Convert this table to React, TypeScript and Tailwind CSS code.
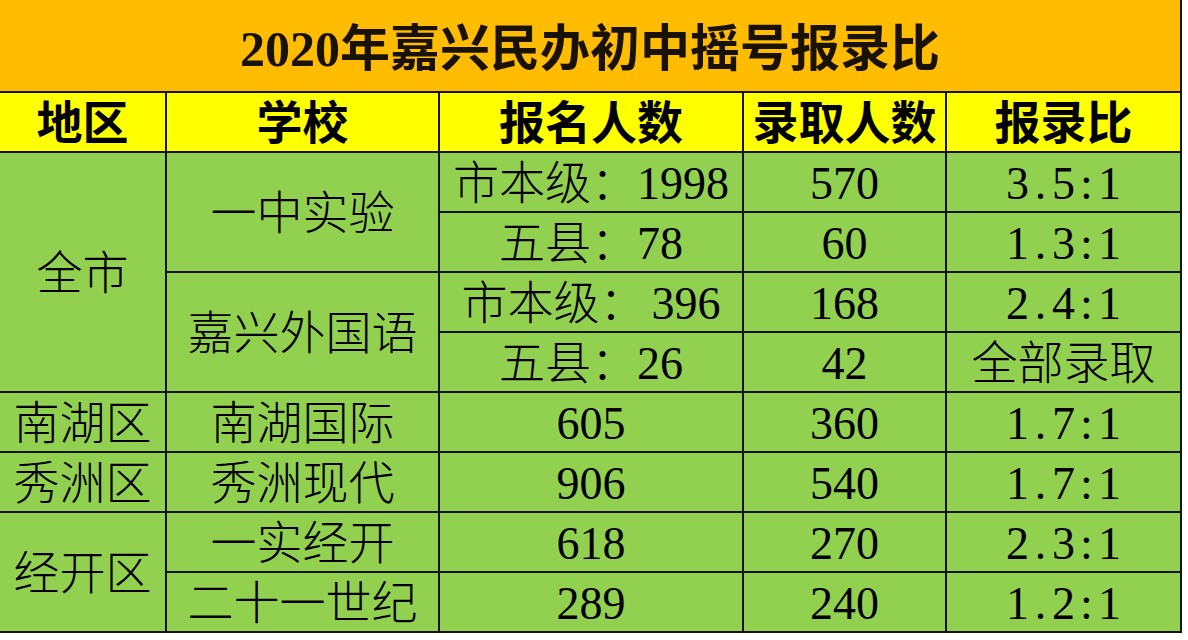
import React from "react";

const FONT = { fontFamily: '"Liberation Serif", "Noto Sans CJK SC", serif' };

function Mono({ s }: { s: string }) {
  return (
    <>
      {Array.from(s).map((ch, i) =>
        ch.charCodeAt(0) < 128 ? (
          <span key={i} className="inline-block w-[0.5em] text-center">
            {ch}
          </span>
        ) : (
          <span key={i}>{ch}</span>
        )
      )}
    </>
  );
}

const body = "bg-[#92D050] flex items-center justify-center text-[46px] leading-none font-light text-black pt-[4px]";
const head = "bg-[#FFFF00] flex items-center justify-center text-[46px] leading-none font-semibold text-black pt-[4px]";

export default function App() {
  return (
    <div className="w-[1188px] h-[640px] bg-white" style={FONT}>
      <div className="grid grid-cols-[165px_271px_302px_201px_233px] grid-rows-[91px_58px_repeat(8,58px)] gap-[2px] bg-[#141414] pr-[2px] pb-[2px] w-[1182px]">
        <div className="col-span-5 bg-[#FFBC00] flex items-center justify-center text-[50px] font-semibold leading-none pt-[6px] text-[#1a1200]">
          <span className="font-bold"><Mono s="2020" /></span>年嘉兴民办初中摇号报录比
        </div>
        <div className={head}>地区</div>
        <div className={head}>学校</div>
        <div className={head}>报名人数</div>
        <div className={head}>录取人数</div>
        <div className={head}>报录比</div>

        <div className={`${body} row-span-4`}>全市</div>
        <div className={`${body} row-span-2`}>一中实验</div>
        <div className={body}>市本级：<Mono s="1998" /></div>
        <div className={body}><Mono s="570" /></div>
        <div className={body}><Mono s="3.5:1" /></div>

        <div className={body}>五县：<Mono s="78" /></div>
        <div className={body}><Mono s="60" /></div>
        <div className={body}><Mono s="1.3:1" /></div>

        <div className={`${body} row-span-2`}>嘉兴外国语</div>
        <div className={body}>市本级：<span className="ml-[6px]"><Mono s="396" /></span></div>
        <div className={body}><Mono s="168" /></div>
        <div className={body}><Mono s="2.4:1" /></div>

        <div className={body}>五县：<Mono s="26" /></div>
        <div className={body}><Mono s="42" /></div>
        <div className={body}>全部录取</div>

        <div className={body}>南湖区</div>
        <div className={body}>南湖国际</div>
        <div className={body}><Mono s="605" /></div>
        <div className={body}><Mono s="360" /></div>
        <div className={body}><Mono s="1.7:1" /></div>

        <div className={body}>秀洲区</div>
        <div className={body}>秀洲现代</div>
        <div className={body}><Mono s="906" /></div>
        <div className={body}><Mono s="540" /></div>
        <div className={body}><Mono s="1.7:1" /></div>

        <div className={`${body} row-span-2`}>经开区</div>
        <div className={body}>一实经开</div>
        <div className={body}><Mono s="618" /></div>
        <div className={body}><Mono s="270" /></div>
        <div className={body}><Mono s="2.3:1" /></div>

        <div className={body}>二十一世纪</div>
        <div className={body}><Mono s="289" /></div>
        <div className={body}><Mono s="240" /></div>
        <div className={body}><Mono s="1.2:1" /></div>
      </div>
    </div>
  );
}
